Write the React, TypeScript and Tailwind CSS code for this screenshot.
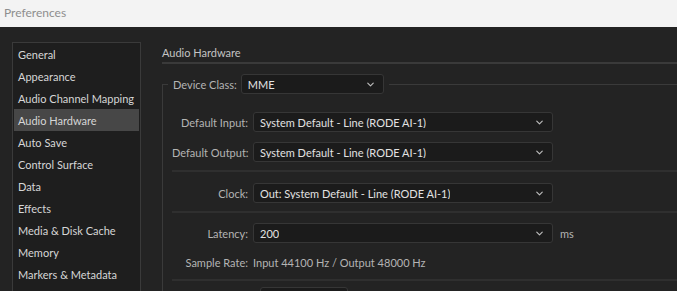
import { ChevronDown } from 'lucide-react';

const navItems = [
    'General',
    'Appearance',
    'Audio Channel Mapping',
    'Audio Hardware',
    'Auto Save',
    'Control Surface',
    'Data',
    'Effects',
    'Media & Disk Cache',
    'Memory',
    'Markers & Metadata',
];

function Select({ value, width }: { value: string; width: string }) {
    return (
        <div
            className={`flex h-[20px] items-center justify-between rounded-[3px] border border-[#363636] bg-[#1b1b1b] pl-[6px] pr-[7px] text-[#e2e2e2] ${width}`}
        >
            <span className="truncate whitespace-nowrap">{value}</span>
            <ChevronDown size={11} strokeWidth={2.5} className="shrink-0 text-[#bdbdbd]" />
        </div>
    );
}

function Row({ label, children }: { label: string; children: React.ReactNode }) {
    return (
        <div className="flex items-center">
            <span className="w-[76px] shrink-0 whitespace-nowrap text-right text-[#b4b4b4]">{label}</span>
            <div className="ml-[5px] flex items-center">{children}</div>
        </div>
    );
}

function Divider() {
    return <div className="h-[2px] bg-[#2f2f2f]" />;
}

export default function App() {
    return (
        <div
            className="h-[291px] w-[677px] overflow-hidden bg-[#232323] text-[11px] leading-none"
            style={{ fontFamily: 'Lato, "Liberation Sans", sans-serif' }}
        >
            {/* Title bar */}
            <div className="flex h-[27px] items-center bg-[#f3f3f3] px-[4px] pb-[2px] text-[12px] text-[#8e8e8e]">
                Preferences
            </div>

            <div className="flex pl-[12px] pt-[15px]">
                {/* Sidebar */}
                <div className="h-[260px] w-[129px] shrink-0 border border-[#3a3a3a] bg-[#1e1e1e] px-[1px]">
                    {navItems.map((item) => (
                        <div
                            key={item}
                            className={`flex h-[22px] items-center whitespace-nowrap pl-[4px] text-[#d6d6d6] ${
                                item === 'Audio Hardware' ? 'bg-[#474747]' : ''
                            }`}
                        >
                            {item}
                        </div>
                    ))}
                </div>

                {/* Content */}
                <div className="ml-[21px] w-[560px] shrink-0">
                    <div className="flex h-[20px] items-center pt-[1px] text-[#c4c4c4]">Audio Hardware</div>
                    <div className="h-[2px] bg-[#3a3a3a]" />

                    <fieldset className="mt-[10px] w-[600px] border-l border-t border-[#3a3a3a] pb-[20px] pl-[9px]">
                        <legend className="ml-[-4px] flex items-center whitespace-nowrap px-[5px]">
                            <span className="text-[#b4b4b4]">Device Class:</span>
                            <div className="ml-[4px]">
                                <Select value="MME" width="w-[143px]" />
                            </div>
                        </legend>

                        <div className="pt-[18px]">
                            <Row label="Default Input:">
                                <Select value="System Default - Line (RODE AI-1)" width="w-[300px]" />
                            </Row>
                            <div className="mt-[10px]">
                                <Row label="Default Output:">
                                    <Select value="System Default - Line (RODE AI-1)" width="w-[300px]" />
                                </Row>
                            </div>
                            <div className="mb-[11px] mt-[8px]">
                                <Divider />
                            </div>
                            <Row label="Clock:">
                                <Select value="Out: System Default - Line (RODE AI-1)" width="w-[300px]" />
                            </Row>
                            <div className="mb-[10px] mt-[8px]">
                                <Divider />
                            </div>
                            <Row label="Latency:">
                                <Select value="200" width="w-[300px]" />
                                <span className="ml-[7px] text-[#b4b4b4]">ms</span>
                            </Row>
                            <div className="mt-[14px] flex items-center">
                                <span className="w-[76px] shrink-0 whitespace-nowrap text-right text-[#b4b4b4]">
                                    Sample Rate:
                                </span>
                                <span className="ml-[5px] whitespace-nowrap text-[#b4b4b4]">
                                    Input 44100 Hz / Output 48000 Hz
                                </span>
                            </div>
                            <div className="mb-[6px] mt-[11px]">
                                <Divider />
                            </div>
                            <div className="ml-[88px] h-[20px] w-[88px] rounded-[3px] border border-[#363636] bg-[#1b1b1b]" />
                        </div>
                    </fieldset>
                </div>
            </div>
        </div>
    );
}
